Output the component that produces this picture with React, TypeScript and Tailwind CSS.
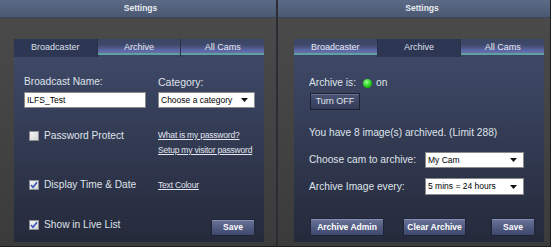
import React from "react";

function Tabs({ active }: { active: number }) {
  const names = ["Broadcaster", "Archive", "All Cams"];
  return (
    <div className="flex h-[18px] gap-px bg-[#2a3146]">
      {names.map((n, i) =>
        i === active ? (
          <div key={n} className="flex-1 bg-[#2d3653] flex justify-center pt-[3px] text-[9px] leading-[11px] text-[#dde1ea]">
            {n}
          </div>
        ) : (
          <div
            key={n}
            className="flex-1 flex justify-center pt-[3px] text-[9px] leading-[11px] text-[#e6e9f2] bg-[linear-gradient(to_bottom,#3a4563_0%,#3f4a6c_35%,#5a64a0_60%,#6670aa_77%,#5fa0a0_78%,#5fa0a0_89%,#3b4667_90%)]"
          >
            {n}
          </div>
        )
      )}
    </div>
  );
}

function Header({ pad }: { pad: string }) {
  return (
    <div className={`h-[18px] flex items-center justify-center border-b border-[#3b4558] bg-linear-to-b from-[#5b6a85] to-[#4b5973] ${pad}`}>
      <span className="text-[8.5px] font-bold text-[#e8ebf0]">Settings</span>
    </div>
  );
}

function Check({ on }: { on?: boolean }) {
  return (
    <div className="w-[10px] h-[10px] border border-[#8d8f96] bg-linear-to-br from-[#f4f4f4] to-[#d6d6d6] flex items-center justify-center">
      {on && (
        <svg width="8" height="8" viewBox="0 0 8 8">
          <path d="M1 4 L3 6.3 L7 1.3" stroke="#3556b8" strokeWidth="1.6" fill="none" />
        </svg>
      )}
    </div>
  );
}

function Select({ text, w, h = "h-[16px]" }: { text: string; w: string; h?: string }) {
  return (
    <div className={`${w} ${h} bg-white border border-[#8a8a8a] flex items-center pl-[2px] pr-[6px] text-[8.5px] text-black`}>
      <span className="flex-1">{text}</span>
      <svg width="7" height="4" viewBox="0 0 7 4">
        <path d="M0 0 H7 L3.5 4 Z" fill="#111" />
      </svg>
    </div>
  );
}

function Btn({ children, w, h = "h-[18px]" }: { children: React.ReactNode; w: string; h?: string }) {
  return (
    <div className={`${w} ${h} flex items-center justify-center border border-[#1f2436] bg-linear-to-b from-[#6a7499] to-[#3e476c] text-[8.5px] font-bold text-white shadow-[inset_0_1px_0_#8690b4]`}>
      {children}
    </div>
  );
}

const label = "text-[10.2px] leading-[14px] text-[#dfe2ea]";
const link = "text-[8.5px] tracking-[-0.2px] leading-[12px] text-[#e2e6f0] underline";

export default function App() {
  return (
    <div className="w-[554px] h-[250px] bg-white font-['Liberation_Sans',Arial,sans-serif]">
      <div className="flex w-[551px] h-[247px] border-r border-b border-[#1c1c1c]">
        {/* left panel */}
        <div className="w-[276px] flex flex-col">
          <Header pad="pl-[5px]" />
          <div className="flex-1 flex flex-col pt-[21px] pl-[14px] pr-[12px] pb-[4px] bg-linear-to-b from-[#4a4a4a] to-[#3b3b3b]">
            <Tabs active={0} />
            <div className="flex-1 bg-linear-to-b from-[#3e4967] to-[#252a3b] pt-[18px] pl-[10px] pr-[9px] flex flex-col">
              <div className="flex">
                <div className={`w-[134px] ${label}`}>Broadcast Name:</div>
                <div className={`${label} text-[10.5px]`}>Category:</div>
              </div>
              <div className="flex mt-[3px]">
                <div className="w-[134px]">
                  <div className="w-[122px] h-[16px] bg-white border border-[#8a8a8a] flex items-center pl-[2px] text-[8.5px] text-black font-medium">
                    ILFS_Test
                  </div>
                </div>
                <Select text="Choose a category" w="w-[97px]" />
              </div>
              <div className="flex mt-[21px]">
                <div className="w-[134px] h-[14px] flex items-center gap-[5px] pl-[5px]">
                  <Check />
                  <span className={label}>Password Protect</span>
                </div>
                <div className="flex flex-col gap-[3px]">
                  <span className={link}>What is my password?</span>
                  <span className={link}>Setup my visitor password</span>
                </div>
              </div>
              <div className="flex mt-[22px]">
                <div className="w-[134px] h-[14px] flex items-center gap-[5px] pl-[5px]">
                  <Check on />
                  <span className={label}>Display Time &amp; Date</span>
                </div>
                <span className={`${link} mt-[1px]`}>Text Colour</span>
              </div>
              <div className="flex mt-[26px]">
                <div className="w-[134px] h-[14px] flex items-center gap-[5px] pl-[5px]">
                  <Check on />
                  <span className={label}>Show in Live List</span>
                </div>
                <div className="flex-1 flex justify-end mt-[1px]">
                  <Btn w="w-[44px]" h="h-[17px]">Save</Btn>
                </div>
              </div>
            </div>
          </div>
        </div>

        <div className="w-[2px] bg-[#2b2d33]" />

        {/* right panel */}
        <div className="w-[272px] flex flex-col">
          <Header pad="pl-[16px]" />
          <div className="flex-1 flex flex-col pt-[21px] pl-[16px] pr-[6px] pb-[4px] bg-linear-to-b from-[#4a4a4a] to-[#3b3b3b]">
            <Tabs active={1} />
            <div className="flex-1 bg-linear-to-b from-[#3e4967] to-[#252a3b] pt-[19px] pl-[15px] flex flex-col">
              <div className={`flex items-center ${label}`}>
                <span>Archive is:</span>
                <span className="ml-[7px] w-[9px] h-[9px] rounded-full bg-[radial-gradient(circle_at_40%_35%,#a0ff90,#22cc18_55%,#0b7d08)]" />
                <span className="ml-[4px]">on</span>
              </div>
              <div className="mt-[3px] ml-[1px] w-[50px] h-[17px] flex items-center justify-center border border-[#1b1f2e] bg-linear-to-b from-[#4a5475] to-[#333b57] text-[9px] text-[#e2e5ee] shadow-[inset_0_1px_0_#67708e]">
                Turn OFF
              </div>
              <div className={`${label} mt-[16px]`}>You have 8 image(s) archived. (Limit 288)</div>
              <div className="flex items-center mt-[12px]">
                <div className={`w-[116px] ${label}`}>Choose cam to archive:</div>
                <Select text="My Cam" w="w-[99px]" />
              </div>
              <div className="flex items-center mt-[10px]">
                <div className={`w-[116px] ${label}`}>Archive Image every:</div>
                <Select text="5 mins = 24 hours" w="w-[99px]" h="h-[17px]" />
              </div>
              <div className="flex mt-[23px] ml-[1px]">
                <Btn w="w-[74px]">Archive Admin</Btn>
                <div className="ml-[19px]">
                  <Btn w="w-[63px]">Clear Archive</Btn>
                </div>
                <div className="ml-[25px]">
                  <Btn w="w-[44px]">Save</Btn>
                </div>
              </div>
            </div>
          </div>
        </div>
      </div>
    </div>
  );
}
